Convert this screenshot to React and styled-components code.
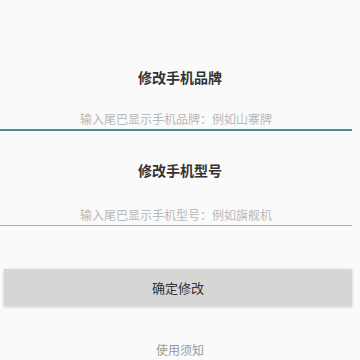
import styled, { createGlobalStyle } from "styled-components";

const GlobalStyle = createGlobalStyle`
  body {
    margin: 0;
    background: #fafafa;
    font-family: "Noto Sans CJK SC", "Noto Sans", sans-serif;
  }
`;

const Page = styled.div`
  width: 360px;
  height: 360px;
  overflow: hidden;
  display: flex;
  flex-direction: column;
  padding-top: 66px;
  box-sizing: border-box;
`;

const Field = styled.div`
  display: flex;
  flex-direction: column;
  align-items: center;
  margin-bottom: ${(p) => p.gap}px;
`;

const Title = styled.div`
  font-size: 14px;
  font-weight: 700;
  color: #333;
  line-height: 22px;
`;

const Input = styled.input`
  box-sizing: content-box;
  width: 352px;
  margin: ${(p) => p.top}px auto 0 0;
  border: none;
  border-bottom: ${(p) => (p.focused ? "2px solid #4b8b9c" : "1px solid #a8a8a8")};
  background: transparent;
  text-align: center;
  font-family: inherit;
  font-size: 12px;
  line-height: 16px;
  height: 16px;
  padding: 0 0 2px;
  outline: none;
  &::placeholder {
    color: #b8b8b8;
  }
`;

const Button = styled.button`
  width: 348px;
  margin: 0 0 0 4px;
  height: 37px;
  border: none;
  background: #d6d6d6;
  box-shadow: 0 1px 3px rgba(0, 0, 0, 0.2);
  font-family: inherit;
  font-size: 13px;
  color: #333;
`;

const Notice = styled.div`
  text-align: center;
  font-size: 12px;
  line-height: 17px;
  color: #999;
  margin-top: 35px;
`;

export default function App() {
  return (
    <>
      <GlobalStyle />
      <Page>
        <Field gap={28}>
          <Title>修改手机品牌</Title>
          <Input focused top={23} placeholder="输入尾巴显示手机品牌：例如山寨牌" />
        </Field>
        <Field gap={43}>
          <Title>修改手机型号</Title>
          <Input top={26} placeholder="输入尾巴显示手机型号：例如旗舰机" />
        </Field>
        <Button>确定修改</Button>
        <Notice>使用须知</Notice>
      </Page>
    </>
  );
}
